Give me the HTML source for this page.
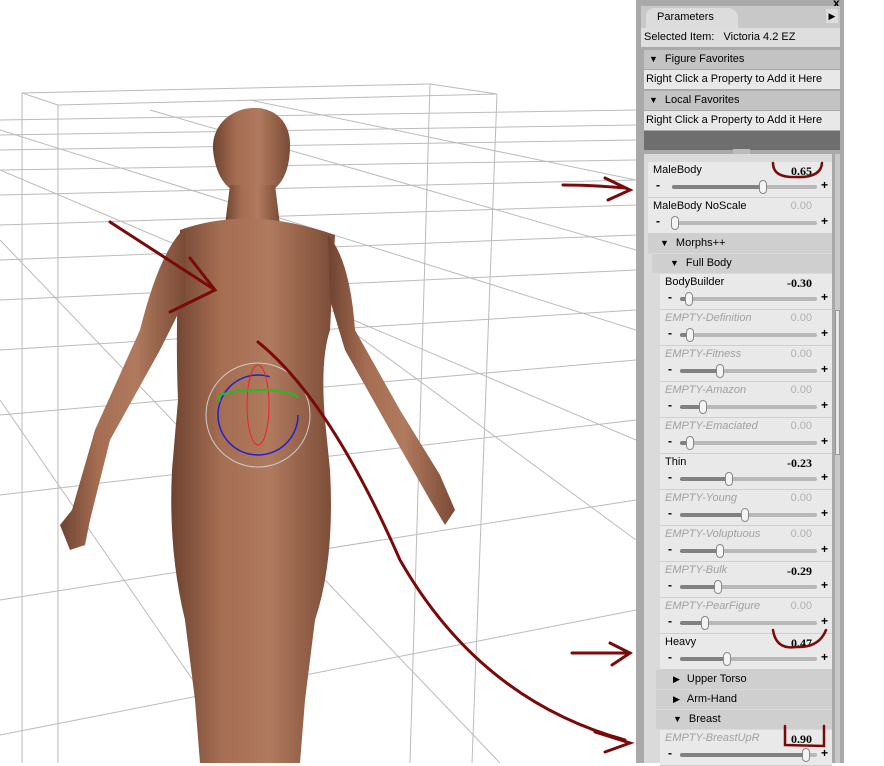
<!DOCTYPE html>
<html><head><style>
*{box-sizing:border-box}
body{margin:0;width:884px;height:763px;overflow:hidden;background:#fff;font-family:"Liberation Sans",sans-serif;font-size:11px;position:relative}
.a{position:absolute}
.panel{left:636px;top:0;width:208px;height:763px;background:#a9a9a9}
.row{position:absolute;left:644px;width:196px;height:19px;line-height:19px;white-space:nowrap}
.hdr{background:#c3c3c3}
.lt{background:#e8e8e8}
.p{position:absolute;height:36px;background:#e9e9e9;border-bottom:1px solid #cfcfcf}
.p .n{position:absolute;left:5px;top:2px}
.p .n.g{color:#a0a0a0;font-style:italic}
.p .v{position:absolute;right:20px;top:2px;color:#b0b0b0}
.p .v.b{color:#000;font-weight:bold;font-family:"Liberation Serif",serif;font-size:12px}
.tr{position:absolute;top:23px;height:4px;border-radius:2px;background:#b8b8b8}
.fill{position:absolute;left:0;top:0;height:4px;border-radius:2px;background:#808080}
.th{position:absolute;top:-5px;width:8px;height:14px;border:1px solid #888;border-radius:4px;background:#f4f4f4}
.mi{position:absolute;top:16px;left:8px;font-weight:bold;font-size:12px}
.pl{position:absolute;top:16px;right:4px;font-weight:bold;font-size:12px}
.tri{font-size:9px;margin-right:7px}
</style></head><body>
<svg class="a" style="left:0;top:0" width="636" height="763">
<defs><linearGradient id="sk" x1="0" x2="1"><stop offset="0" stop-color="#6e4330"/><stop offset="0.3" stop-color="#a56d52"/><stop offset="0.6" stop-color="#b07a5e"/><stop offset="1" stop-color="#7a4b36"/></linearGradient></defs>
<g stroke="#bbb" stroke-width="1" fill="none">
<line x1="0" y1="120" x2="636" y2="110"/><line x1="0" y1="135" x2="636" y2="125"/><line x1="0" y1="150" x2="636" y2="140"/><line x1="0" y1="170" x2="636" y2="160"/><line x1="0" y1="195" x2="636" y2="180"/><line x1="0" y1="225" x2="636" y2="205"/><line x1="0" y1="260" x2="636" y2="235"/><line x1="0" y1="300" x2="636" y2="270"/><line x1="0" y1="350" x2="636" y2="310"/><line x1="0" y1="415" x2="636" y2="360"/><line x1="0" y1="495" x2="636" y2="420"/><line x1="0" y1="600" x2="636" y2="500"/><line x1="0" y1="735" x2="636" y2="610"/>
<line x1="0" y1="130" x2="636" y2="330"/><line x1="0" y1="170" x2="636" y2="440"/><line x1="0" y1="240" x2="500" y2="763"/><line x1="150" y1="110" x2="636" y2="250"/><line x1="250" y1="100" x2="636" y2="180"/><line x1="0" y1="400" x2="250" y2="763"/><line x1="350" y1="330" x2="636" y2="540"/>
<polyline points="22,93 58,105 58,763"/><line x1="22" y1="93" x2="22" y2="763"/><line x1="22" y1="93" x2="430" y2="84"/><line x1="430" y1="84" x2="497" y2="94"/><line x1="58" y1="105" x2="497" y2="94"/><line x1="497" y1="94" x2="472" y2="763"/><line x1="430" y1="84" x2="410" y2="763"/>
</g>
<g fill="url(#sk)">
<path d="M213,150 C210,100 290,90 290,145 C290,180 275,195 252,198 C230,195 216,180 213,150Z"/>
<path d="M230,185 L275,185 L280,225 L225,225Z"/>
<path d="M180,230 Q250,205 335,235 L330,330 Q320,360 325,420 L330,470 Q335,560 315,620 L305,700 L300,763 L200,763 L195,700 L185,620 Q168,550 172,470 L178,400 Q175,330 180,230Z"/>
<path d="M185,228 Q160,250 140,330 L95,430 L72,510 L60,525 L70,550 L85,545 L90,520 L110,440 L160,350 L185,300Z"/>
<path d="M328,235 Q350,260 355,330 L400,410 L440,475 L455,510 L445,525 L430,500 L390,430 L345,350 L330,300Z"/>
</g>
<circle cx="258" cy="415" r="52" fill="none" stroke="#ccc"/>
<circle cx="258" cy="415" r="40" fill="none" stroke="#22c" stroke-width="1.5" stroke-dasharray="200 60"/>
<ellipse cx="258" cy="405" rx="11" ry="40" fill="none" stroke="#e22"/>
<ellipse cx="258" cy="398" rx="40" ry="8" fill="none" stroke="#2b2" stroke-width="2" stroke-dasharray="0 80 100"/>
<g stroke="#7a0a0a" stroke-width="3" fill="none" stroke-linecap="round">
<path d="M110,222 L215,290"/><path d="M190,258 L215,290 L170,312"/>
<path d="M258,342 Q330,400 400,560 Q480,700 625,740"/><path d="M595,732 L630,743 L605,752"/>
<path d="M563,185 Q590,185 625,188"/><path d="M605,178 L630,190 L608,200"/>
<path d="M572,653 L630,653"/><path d="M610,643 L630,653 L612,665"/>
</g>
</svg>
<div class="a panel"></div>
<div class="a" style="left:844px;top:0;width:40px;height:8px;background:#fff"></div>
<div class="a" style="left:833px;top:-4px;font-size:12px;font-weight:bold">x</div>
<div class="a" style="left:641px;top:6px;width:199px;height:22px;background:#c8c8c8"></div>
<div class="a" style="left:646px;top:8px;width:92px;height:20px;background:#dcdcdc;border-radius:8px 10px 0 0;line-height:18px;padding-left:11px;font-size:11px">Parameters</div>
<div class="a" style="left:826px;top:9px;width:12px;height:14px;background:#ddd;font-size:9px;line-height:14px;text-align:center">▶</div>
<div class="row" style="top:28px;background:#dedede;left:641px;width:199px;padding-left:3px">Selected Item:&nbsp;&nbsp;&nbsp;Victoria 4.2 EZ</div>
<div class="row hdr" style="top:50px;padding-left:5px"><span class="tri">▼</span>Figure Favorites</div>
<div class="row lt" style="top:70px;padding-left:2px">Right Click a Property to Add it Here</div>
<div class="row hdr" style="top:91px;padding-left:5px"><span class="tri">▼</span>Local Favorites</div>
<div class="row lt" style="top:111px;padding-left:2px">Right Click a Property to Add it Here</div>
<div class="a" style="left:644px;top:131px;width:196px;height:19px;background:#6e6e6e"></div>
<div class="a" style="left:733px;top:149px;width:17px;height:5px;background:#bbb"></div>
<div class="a" style="left:644px;top:154px;width:188px;height:609px;background:#dadada"></div>
<div class="a" style="left:835px;top:154px;width:5px;height:609px;background:#c8c8c8"></div>
<div class="a" style="left:835px;top:310px;width:5px;height:145px;background:#e8e8e8;border:1px solid #999"></div>

<div class="p" style="left:648px;top:162px;width:184px"><span class="n">MaleBody</span><span class="v b">0.65</span><div class="mi">-</div><div class="tr" style="left:24px;width:145px"><div class="fill" style="width:92px"></div><div class="th" style="left:87px"></div></div><div class="pl">+</div></div>
<div class="p" style="left:648px;top:198px;width:184px"><span class="n">MaleBody NoScale</span><span class="v">0.00</span><div class="mi">-</div><div class="tr" style="left:24px;width:145px"><div class="fill" style="width:4px"></div><div class="th" style="left:-1px"></div></div><div class="pl">+</div></div>
<div class="row hdr" style="top:234px;left:648px;width:184px;padding-left:12px;background:#cfcfcf"><span class="tri">▼</span>Morphs++</div>
<div class="row hdr" style="top:254px;left:652px;width:180px;padding-left:18px;background:#cfcfcf"><span class="tri">▼</span>Full Body</div>

<div class="row hdr" style="top:670px;left:656px;width:176px;padding-left:17px;background:#cfcfcf"><span class="tri">▶</span>Upper Torso</div>
<div class="row hdr" style="top:690px;left:656px;width:176px;padding-left:17px;background:#cfcfcf"><span class="tri">▶</span>Arm-Hand</div>
<div class="row hdr" style="top:710px;left:656px;width:176px;padding-left:17px;background:#cfcfcf"><span class="tri">▼</span>Breast</div>

<div class="p" style="left:660px;top:274px;width:172px"><span class="n">BodyBuilder</span><span class="v b">-0.30</span><div class="mi">-</div><div class="tr" style="left:20px;width:137px"><div class="fill" style="width:10px"></div><div class="th" style="left:5px"></div></div><div class="pl">+</div></div>
<div class="p" style="left:660px;top:310px;width:172px"><span class="n g">EMPTY-Definition</span><span class="v">0.00</span><div class="mi">-</div><div class="tr" style="left:20px;width:137px"><div class="fill" style="width:11px"></div><div class="th" style="left:6px"></div></div><div class="pl">+</div></div>
<div class="p" style="left:660px;top:346px;width:172px"><span class="n g">EMPTY-Fitness</span><span class="v">0.00</span><div class="mi">-</div><div class="tr" style="left:20px;width:137px"><div class="fill" style="width:41px"></div><div class="th" style="left:36px"></div></div><div class="pl">+</div></div>
<div class="p" style="left:660px;top:382px;width:172px"><span class="n g">EMPTY-Amazon</span><span class="v">0.00</span><div class="mi">-</div><div class="tr" style="left:20px;width:137px"><div class="fill" style="width:24px"></div><div class="th" style="left:19px"></div></div><div class="pl">+</div></div>
<div class="p" style="left:660px;top:418px;width:172px"><span class="n g">EMPTY-Emaciated</span><span class="v">0.00</span><div class="mi">-</div><div class="tr" style="left:20px;width:137px"><div class="fill" style="width:11px"></div><div class="th" style="left:6px"></div></div><div class="pl">+</div></div>
<div class="p" style="left:660px;top:454px;width:172px"><span class="n">Thin</span><span class="v b">-0.23</span><div class="mi">-</div><div class="tr" style="left:20px;width:137px"><div class="fill" style="width:50px"></div><div class="th" style="left:45px"></div></div><div class="pl">+</div></div>
<div class="p" style="left:660px;top:490px;width:172px"><span class="n g">EMPTY-Young</span><span class="v">0.00</span><div class="mi">-</div><div class="tr" style="left:20px;width:137px"><div class="fill" style="width:66px"></div><div class="th" style="left:61px"></div></div><div class="pl">+</div></div>
<div class="p" style="left:660px;top:526px;width:172px"><span class="n g">EMPTY-Voluptuous</span><span class="v">0.00</span><div class="mi">-</div><div class="tr" style="left:20px;width:137px"><div class="fill" style="width:41px"></div><div class="th" style="left:36px"></div></div><div class="pl">+</div></div>
<div class="p" style="left:660px;top:562px;width:172px"><span class="n g">EMPTY-Bulk</span><span class="v b">-0.29</span><div class="mi">-</div><div class="tr" style="left:20px;width:137px"><div class="fill" style="width:39px"></div><div class="th" style="left:34px"></div></div><div class="pl">+</div></div>
<div class="p" style="left:660px;top:598px;width:172px"><span class="n g">EMPTY-PearFigure</span><span class="v">0.00</span><div class="mi">-</div><div class="tr" style="left:20px;width:137px"><div class="fill" style="width:26px"></div><div class="th" style="left:21px"></div></div><div class="pl">+</div></div>
<div class="p" style="left:660px;top:634px;width:172px"><span class="n">Heavy</span><span class="v b">0.47</span><div class="mi">-</div><div class="tr" style="left:20px;width:137px"><div class="fill" style="width:48px"></div><div class="th" style="left:43px"></div></div><div class="pl">+</div></div>
<div class="p" style="left:660px;top:730px;width:172px"><span class="n g">EMPTY-BreastUpR</span><span class="v b">0.90</span><div class="mi">-</div><div class="tr" style="left:20px;width:137px"><div class="fill" style="width:127px"></div><div class="th" style="left:122px"></div></div><div class="pl">+</div></div>

<svg class="a" style="left:636px;top:150px" width="200" height="613">
<g stroke="#7a0a0a" stroke-width="2.5" fill="none" stroke-linecap="round">
<path d="M137,13 Q137,28 160,27 Q185,28 186,13"/>
<path d="M137,480 Q140,500 160,497 Q183,498 190,480"/>
<path d="M149,576 L149,595 L188,596 L188,576"/>
</g></svg>
</body></html>
